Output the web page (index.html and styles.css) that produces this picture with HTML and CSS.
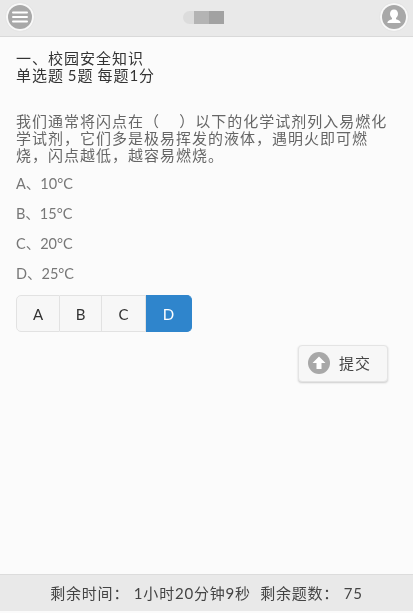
FILE: index.html
```html
<!DOCTYPE html>
<html lang="zh">
<head>
    <meta charset="UTF-8">
    <meta name="viewport" content="width=device-width, initial-scale=1.0">
    <title>校园安全知识</title>
    <link rel="stylesheet" href="styles.css">
</head>
<body>
    <div class="page">
        <div class="header">
            <div class="round-btn">
                <svg width="24" height="24" viewBox="0 0 24 24">
                    <circle cx="12" cy="12" r="12" fill="#a8a8a8"/>
                    <path d="M5 7.500h14M5 12h14M5 16.500h14" stroke="#fff" stroke-width="2" stroke-linecap="round"/>
                </svg>
            </div>
            <div class="logo">
                <span class="logo-pill"></span>
                <span class="logo-a"></span>
                <span class="logo-b"></span>
            </div>
            <div class="round-btn">
                <svg width="24" height="24" viewBox="0 0 24 24">
                    <circle cx="12" cy="12" r="12" fill="#a8a8a8"/>
                    <path d="M12 4.500c2.600 0 4 2 4 4.300 0 2-1 3.500-2 4.300v1.200c2 .7 4.500 1.400 4.700 3.700H5.300c.2-2.300 2.700-3 4.700-3.700v-1.200c-1-.8-2-2.300-2-4.300 0-2.300 1.400-4.300 4-4.300z" fill="#fff"/>
                </svg>
            </div>
        </div>

        <div class="content">
            <div class="title">一、校园安全知识<br>单选题 5题 每题1分</div>

            <p class="question">我们通常将闪点在（&nbsp;&nbsp;&nbsp;&nbsp;）以下的化学试剂列入易燃化学试剂，它们多是极易挥发的液体，遇明火即可燃烧，闪点越低，越容易燃烧。</p>

            <div class="option">A、10°C</div>
            <div class="option">B、15°C</div>
            <div class="option">C、20°C</div>
            <div class="option">D、25°C</div>

            <div class="answers">
                <div class="answer answer-a">A</div>
                <div class="answer answer-b">B</div>
                <div class="answer answer-c">C</div>
                <div class="answer answer-d active">D</div>
            </div>

            <div class="actions">
                <div class="submit">
                    <svg width="22" height="22" viewBox="0 0 22 22">
                        <circle cx="11" cy="11" r="11" fill="#a8a8a8"/>
                        <path d="M11 4.500l6.500 6.500h-4v6h-5v-6h-4z" fill="#fff"/>
                    </svg>
                    <span>提交</span>
                </div>
            </div>
        </div>

        <div class="footer">剩余时间： 1小时20分钟9秒&nbsp;&nbsp;剩余题数： 75</div>
    </div>
</body>
</html>
```

FILE: styles.css
```css
* {
    box-sizing: border-box;
}
html, body {
    height: 100%;
}
body {
    margin: 0;
    background: #fbfbfb;
    color: #333;
    font-family: Lato, "Open Sans", "Noto Sans CJK SC", sans-serif;
    font-size: 15px;
    letter-spacing: 1px;
}
.page {
    display: flex;
    flex-direction: column;
    height: 611px;
    filter: blur(0.35px);
}
.header {
    display: flex;
    justify-content: space-between;
    align-items: center;
    height: 37px;
    padding: 0 5px 2px 6px;
    background: #e9e9e9;
    border-bottom: 1px solid #d9d9d9;
}
.round-btn {
    display: flex;
    width: 28px;
    height: 28px;
    padding: 2px;
    border-radius: 50%;
    background: #f8f8f8;
    box-shadow: 0 0 1px #ccc;
}
.logo {
    display: flex;
    align-items: center;
    height: 13px;
    margin-left: -8px;
}
.logo-pill {
    width: 11px;
    height: 13px;
    border-radius: 7px 0 0 7px;
    background: #dcdcdc;
}
.logo-a {
    width: 15px;
    height: 13px;
    background: #b4b4b4;
}
.logo-b {
    width: 15px;
    height: 13px;
    background: #a2a2a2;
}
.content {
    flex: 1;
    padding: 13px 16px 0;
}
.title {
    line-height: 17px;
    word-spacing: -1px;
    color: #333;
}
.question {
    margin: 29px 0 0;
    line-height: 17px;
    color: #666;
}
.option {
    margin-top: 12px;
    height: 18px;
    font-size: 14.500px;
    letter-spacing: 0;
    line-height: 18px;
    color: #777;
}
.question + .option {
    margin-top: 11px;
}
.answers {
    display: flex;
    width: 176px;
    height: 37px;
    margin-top: 12px;
}
.answer {
    display: flex;
    justify-content: center;
    align-items: center;
    font-size: 15px;
    letter-spacing: 0;
    color: #333;
    background: #f7f7f7;
    border: 1px solid #e2e2e2;
    border-left: 0;
}
.answer-a {
    width: 44px;
    border-left: 1px solid #e2e2e2;
    border-radius: 5px 0 0 5px;
}
.answer-b {
    width: 42px;
}
.answer-c {
    width: 44px;
}
.answer-d {
    width: 46px;
    border-radius: 0 5px 5px 0;
}
.answer.active {
    color: #fff;
    background: #2f85cc;
    border-color: #2f85cc;
}
.actions {
    display: flex;
    justify-content: flex-end;
    margin-top: 13px;
    padding-right: 9px;
}
.submit {
    display: flex;
    align-items: center;
    gap: 9px;
    width: 90px;
    height: 37px;
    padding: 0 0 2px 9px;
    color: #444;
    background: #f7f7f7;
    border: 1px solid #e4e4e4;
    border-radius: 4px;
    box-shadow: 0 1px 2px #ccc;
}
.footer {
    height: 37px;
    line-height: 36px;
    text-align: center;
    letter-spacing: 0.800px;
    color: #444;
    background: #e9e9e9;
    border-top: 1px solid #dcdcdc;
}
```
